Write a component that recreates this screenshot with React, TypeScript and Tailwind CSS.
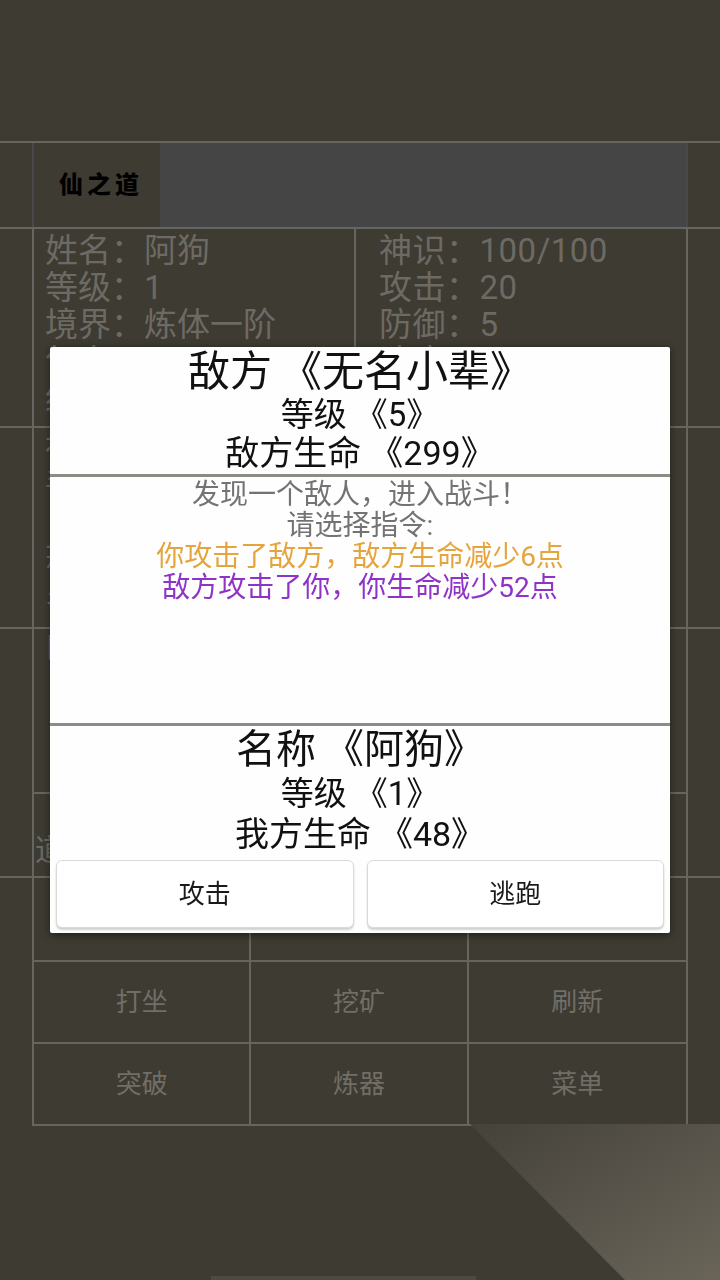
import type { ReactNode } from "react";

const font = { fontFamily: 'Roboto, "Noto Sans CJK SC", sans-serif' };

const leftStats = ["姓名：阿狗", "等级：1", "境界：炼体一阶", "气血：48/48", "经验：0/100"];
const rightStats = ["神识：100/100", "攻击：20", "防御：5", "速度：10", "灵石：0"];
const gridRows = [
  ["修炼", "历练", "商店"],
  ["打坐", "挖矿", "刷新"],
  ["突破", "炼器", "菜单"],
];

function Line() {
  return <div className="h-[2px] bg-[#67655f]" />;
}

// Android renders 《》 a bit wider than the browser does
function Quoted({ label, value }: { label: string; value: ReactNode }) {
  return (
    <>
      {label}
      <span className="ml-[8px]">《</span>
      {value}
      <span className="mr-[-8px] pr-[8px]">》</span>
    </>
  );
}

function Background() {
  return (
    <div className="relative h-[1280px] w-[720px] overflow-hidden bg-[#3e3b32]">
      <div className="h-[141px]" />
      <Line />

      {/* header */}
      <div className="mx-[32px] flex h-[84px] border-x-2 border-[#4b4849]">
        <div className="flex w-[126px] items-center pl-[25px]">
          <span className="text-[24px] font-black tracking-[4px] text-black">仙之道</span>
        </div>
        <div className="flex-1 bg-[#454545]" />
      </div>
      <Line />

      {/* stats */}
      <div className="mx-[32px] flex h-[197px] border-x-2 border-[#67655f] text-[33px] leading-[37px] text-[#6d6a64]">
        <div className="w-[322px] border-r-2 border-[#67655f] pl-[11px] pt-[3px]">
          {leftStats.map((s) => (
            <p key={s}>{s}</p>
          ))}
        </div>
        <div className="flex-1 pl-[23px] pt-[3px] tracking-[0.5px]">
          {rightStats.map((s) => (
            <p key={s}>{s}</p>
          ))}
        </div>
      </div>
      <Line />

      {/* equipment */}
      <div className="mx-[32px] h-[199px] border-x-2 border-[#67655f] pl-[11px] pt-[2px] text-[30px] leading-[36px] text-[#6d6a64]">
        <p>神兵：无</p>
        <p>手镯：无</p>
        <p>　</p>
        <p>戒指：无</p>
        <p>乡土：无</p>
      </div>
      <Line />

      {/* bag */}
      <div className="mx-[32px] flex h-[247px] flex-col border-x-2 border-[#67655f] text-[30px] text-[#6d6a64]">
        <div className="h-[165px] border-b-2 border-[#67655f] pl-[11px] leading-[36px]">
          <p>口袋：空</p>
        </div>
        <div className="flex flex-1 items-end pb-[8px] pl-[1px] leading-[36px]">
          <p>道具</p>
        </div>
      </div>
      <Line />

      {/* command grid */}
      <div className="mx-[32px] border-x-2 border-b-2 border-[#67655f]">
        {gridRows.map((row, i) => (
          <div
            key={i}
            className={`grid h-[82px] grid-cols-3 ${i > 0 ? "border-t-2 border-[#67655f]" : ""}`}
          >
            {row.map((label, j) => (
              <div
                key={label}
                className={`flex items-center justify-center text-[26px] text-[#716e67] ${j < 2 ? "border-r-2 border-[#67655f]" : ""}`}
              >
                {label}
              </div>
            ))}
          </div>
        ))}
      </div>

      {/* wallpaper light */}
      <div className="absolute bottom-0 right-0 h-[156px] w-[250px] bg-gradient-to-br from-[#45423a] via-[#57534a] to-[#6a6558] [clip-path:polygon(0_0,100%_0,100%_100%,62%_100%)]" />
      <div className="absolute bottom-0 left-[211px] h-[4px] w-[265px] bg-[#4d4a42]" />
    </div>
  );
}

function BattleDialog() {
  return (
    <div className="fixed inset-0 flex items-center justify-center">
      <div className="flex h-[586px] w-[620px] flex-col overflow-hidden rounded-[2px] bg-[#fefefe] text-center text-[#111] shadow-[0_2px_8px_rgba(0,0,0,0.5)]">
        <div className="h-[127px]">
          <p className="text-[42px] leading-[50px]">
            <Quoted label="敌方" value="无名小辈" />
          </p>
          <p className="text-[33px] leading-[36px]">
            <Quoted label="等级" value="5" />
          </p>
          <p className="text-[34px] leading-[41px]">
            <Quoted label="敌方生命" value="299" />
          </p>
        </div>
        <div className="h-[3px] bg-[#8c8c87]" />
        <div className="h-[246px] pt-[2px] text-[28px] leading-[31px]">
          <p className="text-[#737373]">发现一个敌人，进入战斗！</p>
          <p className="text-[#737373]">请选择指令:</p>
          <p className="text-[#e5a43c]">你攻击了敌方，敌方生命减少6点</p>
          <p className="text-[#8f33c6]">敌方攻击了你，你生命减少52点</p>
        </div>
        <div className="h-[3px] bg-[#8c8c87]" />
        <div className="flex flex-1 flex-col">
          <p className="text-[40px] leading-[48px]">
            <Quoted label="名称" value="阿狗" />
          </p>
          <p className="text-[33px] leading-[40px]">
            <Quoted label="等级" value="1" />
          </p>
          <p className="text-[34px] leading-[40px]">
            <Quoted label="我方生命" value="48" />
          </p>
          <div className="flex gap-[13px] px-[6px] pt-[6px]">
            <button
              type="button"
              className="h-[68px] flex-1 rounded-[6px] border border-[#dadada] bg-white text-[26px] text-[#1a1a1a] shadow-[0_2px_2px_rgba(0,0,0,0.18)]"
            >
              攻击
            </button>
            <button
              type="button"
              className="h-[68px] flex-1 rounded-[6px] border border-[#dadada] bg-white text-[26px] text-[#1a1a1a] shadow-[0_2px_2px_rgba(0,0,0,0.18)]"
            >
              逃跑
            </button>
          </div>
        </div>
      </div>
    </div>
  );
}

export default function App() {
  return (
    <div style={font} className="relative h-[1280px] w-[720px]">
      <Background />
      <BattleDialog />
    </div>
  );
}
